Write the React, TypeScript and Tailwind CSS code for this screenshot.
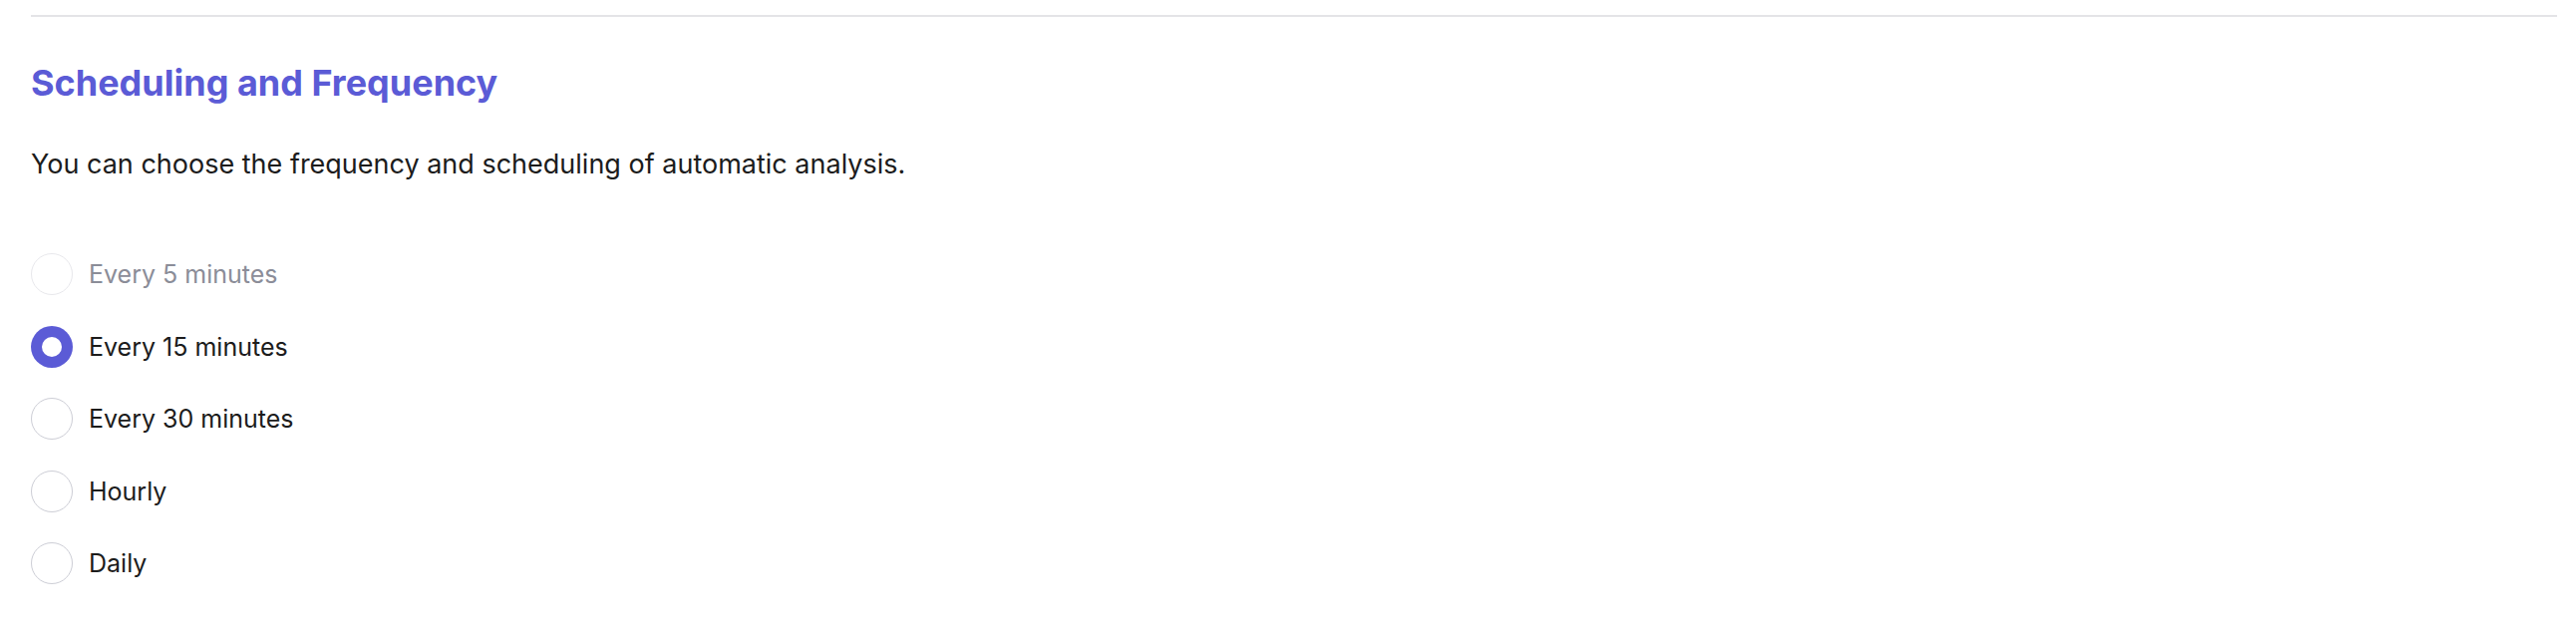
import React from "react";

const options = [
  { label: "Every 5 minutes", disabled: true, checked: false },
  { label: "Every 15 minutes", disabled: false, checked: true },
  { label: "Every 30 minutes", disabled: false, checked: false },
  { label: "Hourly", disabled: false, checked: false },
  { label: "Daily", disabled: false, checked: false },
];

export default function App() {
  return (
    <div
      className="min-h-[638px] bg-white pl-[31px] pr-[19px] pt-[15px]"
      style={{ fontFamily: "Inter, 'Noto Sans', sans-serif" }}
    >
      <div className="h-[2px] bg-[#e4e4e7]" />
      <h2 className="mt-[44px] text-[36px] leading-[44px] font-bold text-[#5b5bd6]">
        Scheduling and Frequency
      </h2>
      <p className="mt-[40px] text-[27px] leading-[40px] text-[#1c1c1c]">
        You can choose the frequency and scheduling of automatic analysis.
      </p>
      <div className="mt-[69px] flex flex-col gap-[30.5px]">
        {options.map((o) => (
          <label key={o.label} className="flex items-center gap-[16px]">
            {o.checked ? (
              <span className="flex h-[42px] w-[42px] items-center justify-center rounded-full bg-[#5b5bd6]">
                <span className="h-[20px] w-[20px] rounded-full bg-white" />
              </span>
            ) : (
              <span
                className={
                  "h-[42px] w-[42px] rounded-full border-[1.5px] bg-white " +
                  (o.disabled ? "border-[#e8e8ec]" : "border-[#cdced6]")
                }
              />
            )}
            <span
              className={
                "text-[25px] leading-[40px] " +
                (o.disabled ? "text-[#8b8d98]" : "text-[#1c1c1c]")
              }
            >
              {o.label}
            </span>
          </label>
        ))}
      </div>
    </div>
  );
}
